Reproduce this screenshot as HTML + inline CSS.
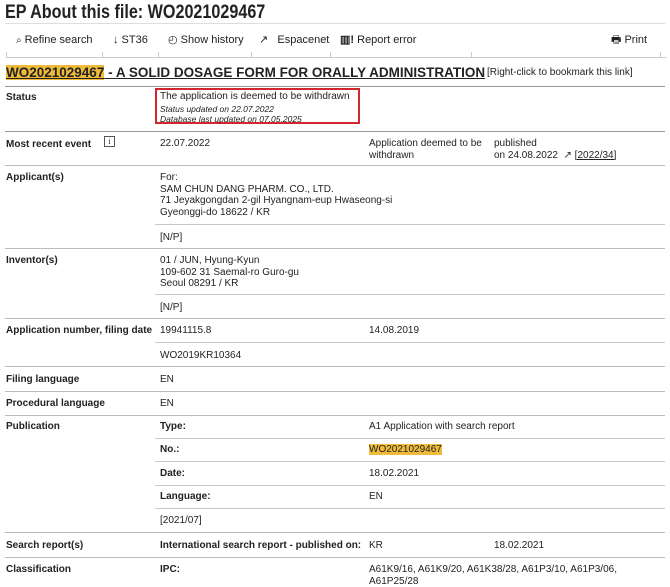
<!DOCTYPE html>
<html><head><style>
body{margin:0;width:670px;height:586px;background:#fff;font-family:"Liberation Sans",sans-serif;color:#222;position:relative;overflow:hidden}
.a{position:absolute;white-space:nowrap;font-size:10px;line-height:11.5px}
.b{font-weight:bold}
.h{position:absolute;height:1px;background:#c8c8c8}
.t{position:absolute;width:1px;height:6px;background:#c8c8c8;top:52px}
.hl{background:#f0bb3a}
</style></head><body>
<div class="a b" style="left:5px;top:3px;font-size:19px;line-height:20px;color:#222;transform:scaleX(0.85);transform-origin:0 0">EP About this file: WO2021029467</div>
<div class="h" style="left:5px;top:23px;width:660px;background:#ddd"></div>

<div class="a" style="left:16px;top:35px;font-size:11px">
<span style="font-size:10px">⌕</span> Refine search</div>
<div class="a" style="left:113px;top:35px;font-size:11px">↓ ST36</div>
<div class="a" style="left:168px;top:35px;font-size:11px">◴ Show history</div>
<div class="a" style="left:259px;top:35px;font-size:11px">↗&nbsp;&nbsp; Espacenet</div>
<div class="a" style="left:340px;top:35px;font-size:11px"><b>▥!</b> Report error</div>
<div class="a" style="left:611px;top:35px;font-size:11px">🖶 Print</div>
<div class="h" style="left:6px;top:57px;width:660px;background:#ccc"></div>
<div class="t" style="left:6px"></div><div class="t" style="left:102px"></div><div class="t" style="left:158px"></div><div class="t" style="left:251px"></div><div class="t" style="left:330px"></div><div class="t" style="left:471px"></div><div class="t" style="left:660px"></div>

<div class="a b" style="left:6px;top:65px;font-size:13.5px;line-height:15px;text-decoration:underline"><span class="hl">WO2021029467</span> - A SOLID DOSAGE FORM FOR ORALLY ADMINISTRATION</div>
<div class="a" style="left:487px;top:67px;font-size:10px">[Right-click to bookmark this link]</div>
<div class="h" style="left:5px;top:86px;width:660px;background:#999"></div>

<div class="a b" style="left:6px;top:92px">Status</div>
<div style="position:absolute;left:155px;top:88px;width:205px;height:36px;border:2px solid #d0282e;box-sizing:border-box"></div>
<div class="a" style="left:160px;top:91px">The application is deemed to be withdrawn</div>
<div class="a" style="left:160px;top:104px;font-size:8.5px;font-style:italic;line-height:10px">Status updated on  22.07.2022<br>Database last updated on 07.05.2025</div>
<div class="h" style="left:5px;top:131px;width:660px;background:#999"></div>

<div class="a b" style="left:6px;top:139px">Most recent event</div>
<div style="position:absolute;left:104px;top:136px;width:9px;height:9px;border:1px solid #555;font-size:8px;line-height:9px;text-align:center;font-family:'Liberation Serif'">i</div>
<div class="a" style="left:160px;top:138px">22.07.2022</div>
<div class="a" style="left:369px;top:138px">Application deemed to be<br>withdrawn</div>
<div class="a" style="left:494px;top:138px">published<br>on 24.08.2022 &nbsp;↗ <u>[2022/34]</u></div>
<div class="h" style="left:5px;top:165px;width:660px;background:#bbb"></div>

<div class="a b" style="left:6px;top:172px">Applicant(s)</div>
<div class="a" style="left:160px;top:172px">For:<br>SAM CHUN DANG PHARM. CO., LTD.<br>71 Jeyakgongdan 2-gil Hyangnam-eup Hwaseong-si<br>Gyeonggi-do 18622 / KR</div>
<div class="h" style="left:155px;top:224px;width:510px"></div>
<div class="a" style="left:160px;top:232px">[N/P]</div>
<div class="h" style="left:5px;top:248px;width:660px;background:#bbb"></div>

<div class="a b" style="left:6px;top:255px">Inventor(s)</div>
<div class="a" style="left:160px;top:255px">01 / JUN, Hyung-Kyun<br>109-602 31 Saemal-ro Guro-gu<br>Seoul 08291 / KR</div>
<div class="h" style="left:155px;top:294px;width:510px"></div>
<div class="a" style="left:160px;top:302px">[N/P]</div>
<div class="h" style="left:5px;top:318px;width:660px;background:#bbb"></div>

<div class="a b" style="left:6px;top:325px">Application number, filing date</div>
<div class="a" style="left:160px;top:325px">19941115.8</div>
<div class="a" style="left:369px;top:325px">14.08.2019</div>
<div class="h" style="left:155px;top:342px;width:510px"></div>
<div class="a" style="left:160px;top:350px">WO2019KR10364</div>
<div class="h" style="left:5px;top:366px;width:660px;background:#bbb"></div>

<div class="a b" style="left:6px;top:374px">Filing language</div>
<div class="a" style="left:160px;top:374px">EN</div>
<div class="h" style="left:5px;top:391px;width:660px;background:#bbb"></div>
<div class="a b" style="left:6px;top:398px">Procedural language</div>
<div class="a" style="left:160px;top:398px">EN</div>
<div class="h" style="left:5px;top:415px;width:660px;background:#bbb"></div>

<div class="a b" style="left:6px;top:421px">Publication</div>
<div class="a b" style="left:160px;top:421px">Type:</div>
<div class="a" style="left:369px;top:421px">A1 Application with search report</div>
<div class="h" style="left:155px;top:438px;width:510px"></div>
<div class="a b" style="left:160px;top:444px">No.:</div>
<div class="a" style="left:369px;top:444px"><span class="hl">WO2021029467</span></div>
<div class="h" style="left:155px;top:461px;width:510px"></div>
<div class="a b" style="left:160px;top:468px">Date:</div>
<div class="a" style="left:369px;top:468px">18.02.2021</div>
<div class="h" style="left:155px;top:485px;width:510px"></div>
<div class="a b" style="left:160px;top:491px">Language:</div>
<div class="a" style="left:369px;top:491px">EN</div>
<div class="h" style="left:155px;top:508px;width:510px"></div>
<div class="a" style="left:160px;top:515px">[2021/07]</div>
<div class="h" style="left:5px;top:532px;width:660px;background:#bbb"></div>

<div class="a b" style="left:6px;top:540px">Search report(s)</div>
<div class="a b" style="left:160px;top:540px">International search report - published on:</div>
<div class="a" style="left:369px;top:540px">KR</div>
<div class="a" style="left:494px;top:540px">18.02.2021</div>
<div class="h" style="left:5px;top:557px;width:660px;background:#bbb"></div>

<div class="a b" style="left:6px;top:564px">Classification</div>
<div class="a b" style="left:160px;top:564px">IPC:</div>
<div class="a" style="left:369px;top:564px">A61K9/16, A61K9/20, A61K38/28, A61P3/10, A61P3/06,<br>A61P25/28</div>
</body></html>
